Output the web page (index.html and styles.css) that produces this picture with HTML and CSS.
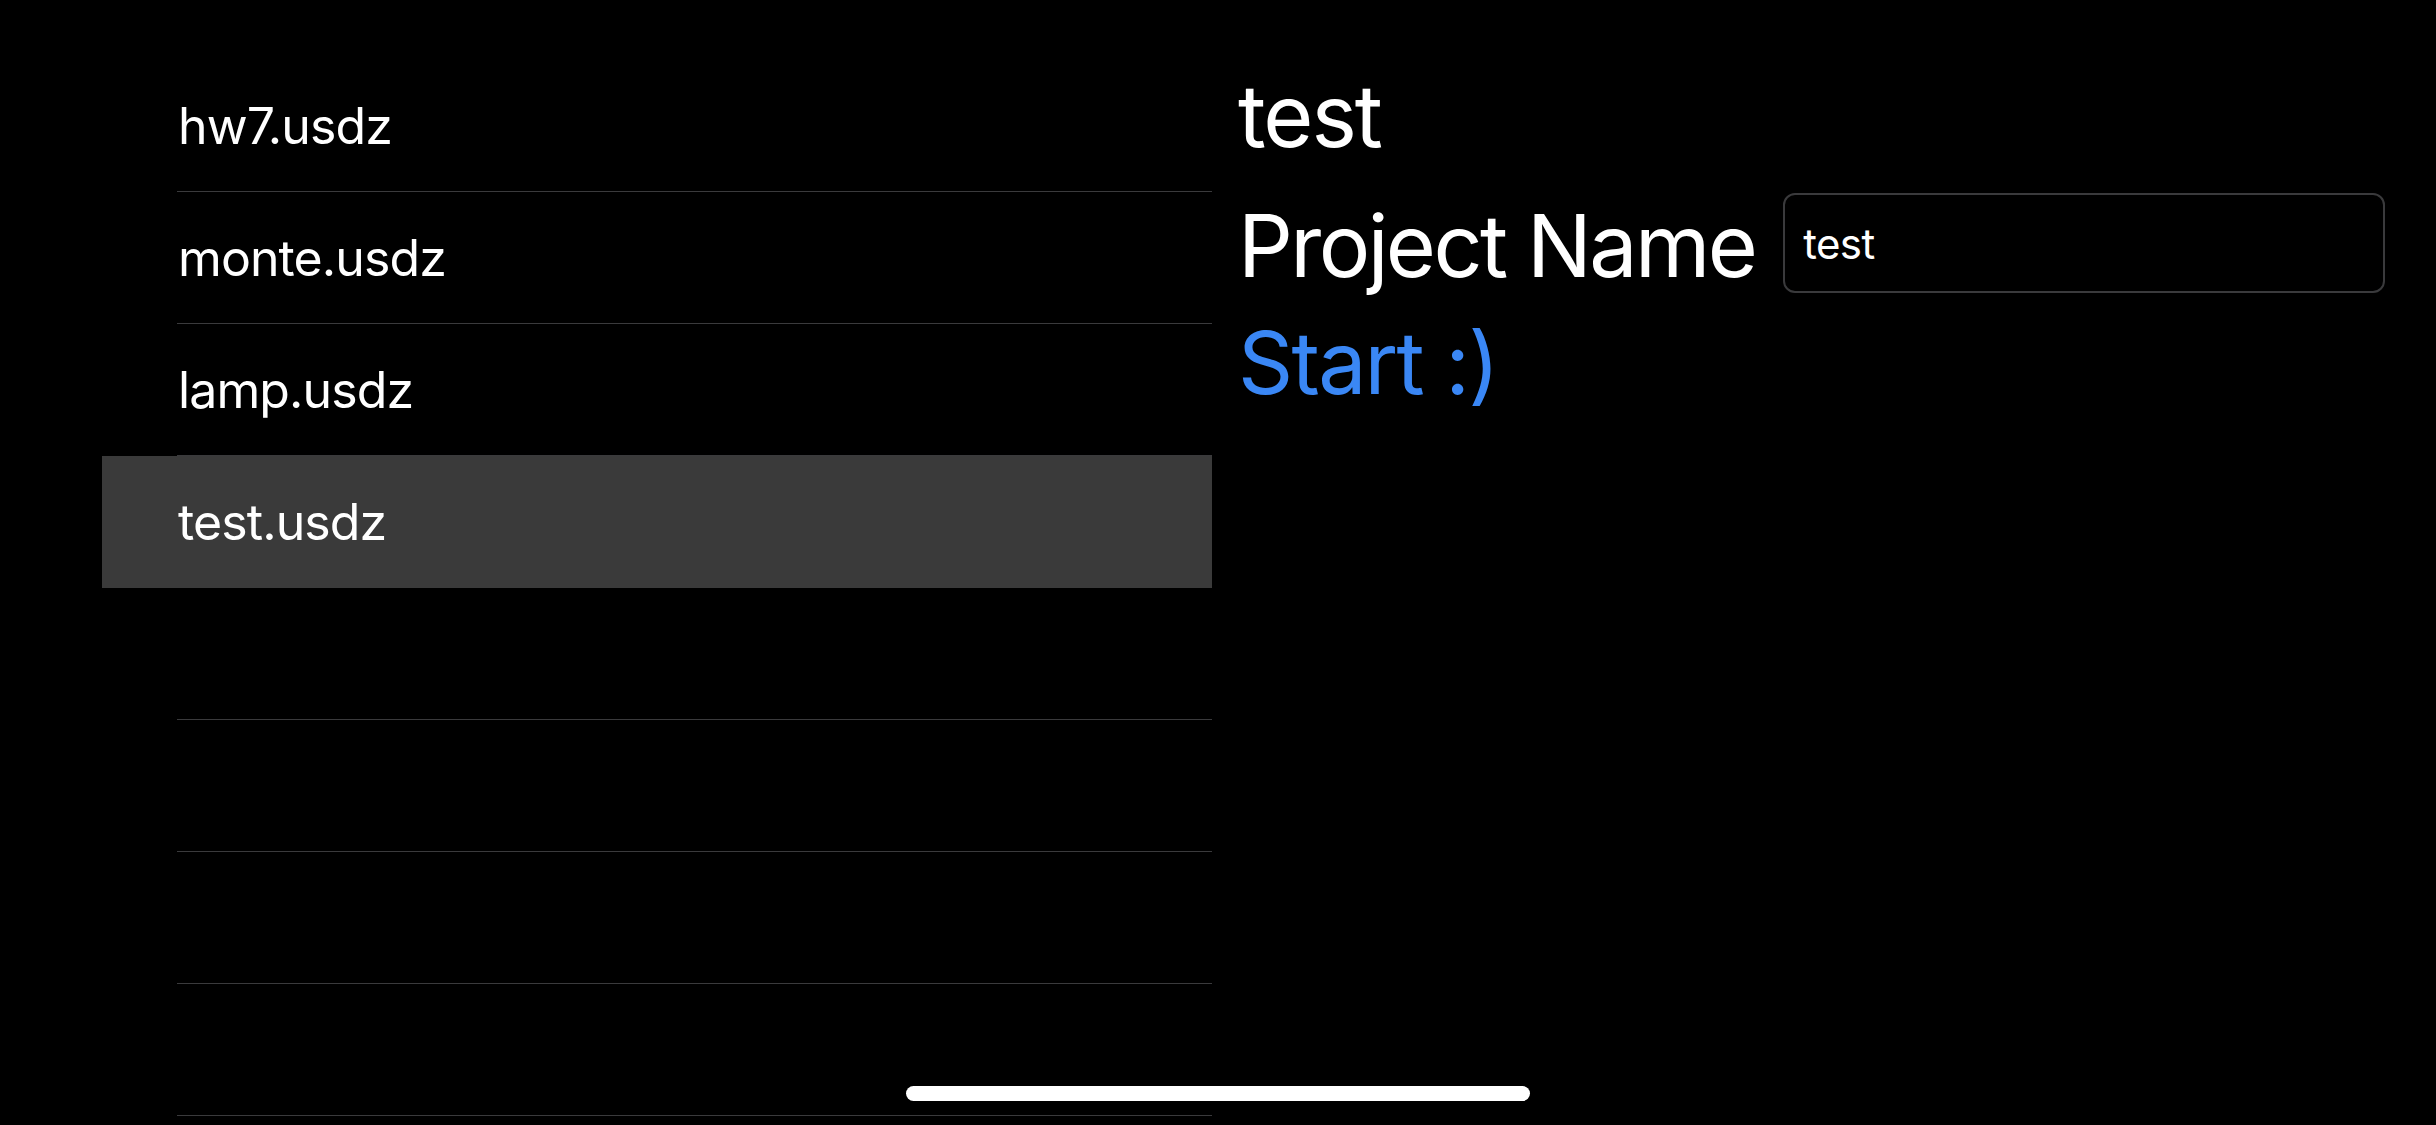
FILE: index.html
```html
<!DOCTYPE html>
<html lang="en">
<head>
<meta charset="utf-8">
<title>Projects</title>
<link rel="stylesheet" href="styles.css">
</head>
<body>
<div class="app">
  <div class="list">
    <div class="row"><div class="cell">hw7.usdz</div></div>
    <div class="row"><div class="cell">monte.usdz</div></div>
    <div class="row"><div class="cell">lamp.usdz</div></div>
    <div class="row selected"><div class="cell">test.usdz</div></div>
    <div class="row"><div class="cell"></div></div>
    <div class="row"><div class="cell"></div></div>
    <div class="row"><div class="cell"></div></div>
    <div class="row"><div class="cell"></div></div>
    <div class="row"><div class="cell"></div></div>
  </div>
  <div class="detail">
    <div class="title">test</div>
    <div class="field-row">
      <div class="label">Project Name</div>
      <input class="field" type="text" value="test">
    </div>
    <div class="start">Start :)</div>
  </div>
</div>
<div class="home-bar"></div>
</body>
</html>
```
FILE: styles.css
```css
html, body {
  margin: 0;
  padding: 0;
  background: #000;
  width: 2436px;
  height: 1125px;
  overflow: hidden;
  font-family: Inter, "Liberation Sans", sans-serif;
  color: #fff;
}

.app {
  display: flex;
  padding-left: 102px;
  height: 1125px;
  overflow: hidden;
}

.list {
  box-sizing: border-box;
  width: 1110px;
  height: 1125px;
  padding-top: 60px;
  flex-shrink: 0;
  overflow: hidden;
}

.row {
  padding-left: 75px;
}

.cell {
  height: 131px;
  border-bottom: 1px solid #3a3a3c;
  display: flex;
  align-items: center;
  padding-left: 1px;
  font-size: 50px;
  letter-spacing: -0.9px;
}

.row.selected {
  background: #3a3a3a;
}

.row.selected .cell {
  border-bottom-color: transparent;
}

.detail {
  padding-left: 26px;
  padding-top: 73px;
  display: flex;
  flex-direction: column;
  align-items: flex-start;
}

.title {
  font-size: 86px;
  line-height: 86px;
  letter-spacing: -2px;
}

.field-row {
  margin-top: 34px;
  display: flex;
  align-items: center;
  gap: 28px;
  height: 100px;
}

.label {
  font-size: 86px;
  line-height: 100px;
  letter-spacing: -2.6px;
  padding-top: 6px;
}

.field {
  box-sizing: border-box;
  width: 602px;
  height: 100px;
  background: #000;
  border: 2px solid #3a3a3c;
  border-radius: 12px;
  padding: 0 0 0 18px;
  color: #fff;
  font-family: Inter, "Liberation Sans", sans-serif;
  font-size: 42px;
  letter-spacing: -0.6px;
  outline: none;
}

.start {
  margin-top: 27px;
  font-size: 86px;
  line-height: 86px;
  letter-spacing: -1.8px;
  color: #3a87f5;
}

.home-bar {
  position: absolute;
  left: 906px;
  top: 1086px;
  width: 624px;
  height: 15px;
  border-radius: 8px;
  background: #fff;
}
```
